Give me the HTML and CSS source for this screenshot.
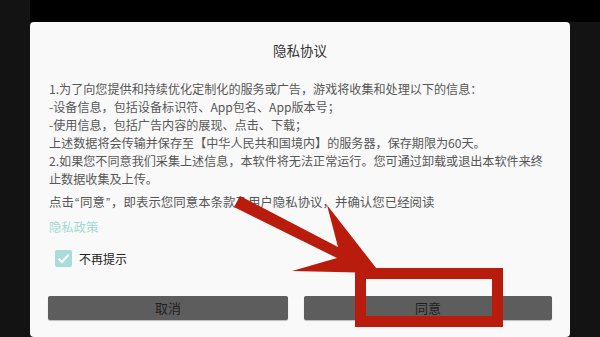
FILE: index.html
```html
<!DOCTYPE html>
<html lang="zh-CN">
<head>
<meta charset="utf-8">
<title>隐私协议</title>
<link rel="stylesheet" href="styles.css">
</head>
<body>
<div class="screen">
  <div class="topbar"></div>
  <div class="dialog">
    <div class="title">隐私协议</div>
    <div class="content">
      <div class="line">1.为了向您提供和持续优化定制化的服务或广告，游戏将收集和处理以下的信息：</div>
      <div class="line">-设备信息，包括设备标识符、App包名、App版本号；</div>
      <div class="line">-使用信息，包括广告内容的展现、点击、下载；</div>
      <div class="line">上述数据将会传输并保存至【中华人民共和国境内】的服务器，保存期限为60天。</div>
      <div class="line">2.如果您不同意我们采集上述信息，本软件将无法正常运行。您可通过卸载或退出本软件来终</div>
      <div class="line">止数据收集及上传。</div>
      <div class="line notice">点击<span class="quote">“</span>同意<span class="quote">”</span>，即表示您同意本条款及用户隐私协议，并确认您已经阅读</div>
      <div class="line link">隐私政策</div>
    </div>
    <label class="check-row">
      <span class="checkbox">
        <svg width="17" height="17" viewBox="0 0 17 17"><path d="M3.5 8.6 L7 12 L13.6 4.8" fill="none" stroke="#ffffff" stroke-width="2"/></svg>
      </span>
      <span class="check-label">不再提示</span>
    </label>
    <div class="buttons">
      <div class="btn btn-cancel">取消</div>
      <div class="btn btn-ok">同意</div>
    </div>
  </div>
  <svg class="overlay" width="600" height="337" viewBox="0 0 600 337">
    <polygon points="240,196 338,247 327,205 380,273 292,271 337,258 234,207" fill="#b91b0c"/>
    <rect x="360.5" y="273.5" width="137" height="48" fill="none" stroke="#b91b0c" stroke-width="11"/>
  </svg>
</div>
</body>
</html>
```

FILE: styles.css
```css
html, body {
  margin: 0;
  padding: 0;
}
body {
  background: #131313;
  font-family: "Noto Sans CJK SC", "Noto Sans", sans-serif;
  width: 600px;
  height: 337px;
  overflow: hidden;
}
.screen {
  position: relative;
  width: 600px;
  height: 337px;
  display: flex;
  flex-direction: column;
}
.topbar {
  height: 22px;
  margin-left: 30px;
  background: #000;
  flex: none;
}
.dialog {
  margin: 0 30px;
  height: 316px;
  background: #f9f9f9;
  border-radius: 4px;
  padding: 18px 18px 0 18px;
  box-sizing: border-box;
  display: flex;
  flex-direction: column;
}
.title {
  text-align: center;
  font-size: 13.5px;
  line-height: 20px;
  color: #333;
}
.content {
  margin-top: 20px;
  padding-left: 1px;
}
.line {
  font-size: 12.1px;
  line-height: 18px;
  color: #575757;
  white-space: nowrap;
}
.notice {
  margin-top: 5px;
  font-size: 12.45px;
}
.quote {
  font-family: "Liberation Sans", sans-serif;
  margin: 0 1px;
}
.link {
  margin-top: 6px;
  color: #a3d9d5;
  font-size: 12.3px;
}
.check-row {
  display: flex;
  align-items: center;
  margin-top: 13px;
  margin-left: 7px;
  height: 18px;
}
.checkbox {
  width: 17px;
  height: 17px;
  background: #a9dcd9;
  border-radius: 2px;
  display: flex;
}
.check-label {
  margin-left: 7px;
  font-size: 12px;
  color: #222;
}
.buttons {
  display: flex;
  gap: 16px;
  margin-top: 29px;
}
.btn {
  height: 24px;
  line-height: 24px;
  background: #5d5d5d;
  border-radius: 2px;
  text-align: center;
  font-size: 13px;
  color: #1f1f1f;
  box-shadow: 0 1px 1px rgba(0,0,0,0.25);
}
.btn-cancel {
  width: 240px;
}
.btn-ok {
  width: 248px;
}
.overlay {
  position: absolute;
  left: 0;
  top: 0;
}
```
